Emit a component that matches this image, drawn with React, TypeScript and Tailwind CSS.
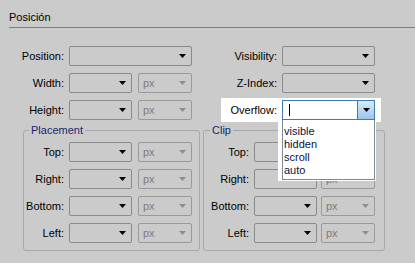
import React from 'react'

const font = { fontFamily: '"Liberation Sans", Arial, sans-serif' }

type SelProps = {
  w: string
  disabled?: boolean
  text?: string
}

const Arrow = ({ grey }: { grey?: boolean }) => (
  <svg width="7" height="4" viewBox="0 0 7 4" className="shrink-0">
    <polygon points="0,0 7,0 3.5,4" fill={grey ? '#8e8e8e' : '#000'} />
  </svg>
)

const Select = ({ w, disabled, text }: SelProps) => (
  <div
    className={`${w} h-[20px] flex items-center justify-between rounded-[2px] border pl-[4px] pr-[5px] ${
      disabled ? 'border-[#9a9a9a] text-[#7c7c7c]' : 'border-[#8a8a8a]'
    }`}
  >
    <span>{text}</span>
    <Arrow grey={disabled} />
  </div>
)

const Row = ({ label, labelW, children }: { label: string; labelW: string; children: React.ReactNode }) => (
  <div className="flex items-center h-[20px]">
    <div className={`${labelW} text-right`}>{label}</div>
    {children}
  </div>
)

const SizeRow = ({ label, labelW, gap }: { label: string; labelW: string; gap: string }) => (
  <Row label={label} labelW={labelW}>
    <div className={`flex ${gap} ml-[5px]`}>
      <Select w="w-[63px]" />
      <Select w="w-[54px]" disabled text="px" />
    </div>
  </Row>
)

export default function App() {
  return (
    <div className="w-[415px] h-[263px] bg-[#cbcbcb] text-[11px] leading-[14px] text-black overflow-hidden" style={font}>
      {/* header */}
      <div className="ml-[9px] h-[28px] pt-[10px] border-b border-[#7d7d7d]">Posición</div>

      {/* top rows */}
      <div className="flex mt-[18px]">
        <div className="flex flex-col gap-[7px] w-[221px]">
          <Row label="Position:" labelW="w-[64px]">
            <div className="ml-[5px]">
              <Select w="w-[123px]" />
            </div>
          </Row>
          <SizeRow label="Width:" labelW="w-[64px]" gap="gap-[6px]" />
          <SizeRow label="Height:" labelW="w-[64px]" gap="gap-[6px]" />
        </div>
        <div className="flex flex-col gap-[7px]">
          <Row label="Visibility:" labelW="w-[56px]">
            <div className="ml-[5px]">
              <Select w="w-[93px]" />
            </div>
          </Row>
          <Row label="Z-Index:" labelW="w-[56px]">
            <div className="ml-[5px]">
              <Select w="w-[93px]" />
            </div>
          </Row>
          <div className="-my-[2px] py-[2px] pr-[6px] bg-white">
            <Row label="Overflow:" labelW="w-[56px]">
              <div className="ml-[5px] relative">
                <div className="w-[93px] h-[20px] flex items-center border border-[#3f7cb4] bg-white">
                  <div className="ml-[6px] w-px h-[12px] bg-black" />
                  <div className="ml-auto w-[17px] h-[18px] flex items-center justify-center border-l border-[#3f7cb4] bg-gradient-to-b from-[#d8eafb] to-[#9cc4ec]">
                    <Arrow />
                  </div>
                </div>
                {/* open dropdown list */}
                <div className="absolute left-[-4px] top-[20px] w-[98px] pl-[4px] pb-[1px] bg-white z-10">
                  <div className="w-[93px] border border-t-0 border-[#7b8a99] bg-white pl-[1px] pt-[5px] pb-[2px] leading-[13px] text-[#101040]">
                    <div>visible</div>
                    <div>hidden</div>
                    <div>scroll</div>
                    <div>auto</div>
                  </div>
                </div>
              </div>
            </Row>
          </div>
        </div>
      </div>

      {/* groups */}
      <div className="flex mt-[3px]">
        <fieldset className="ml-[23px] w-[177px] border border-[#a3a9ae] rounded-[3px] pb-[7px]">
          <legend className="ml-[5px] px-[2px] text-[#1b1f6e]">Placement</legend>
          <div className="flex flex-col gap-[7px] pt-[5px]">
            <SizeRow label="Top:" labelW="w-[40px]" gap="gap-[6px]" />
            <SizeRow label="Right:" labelW="w-[40px]" gap="gap-[6px]" />
            <SizeRow label="Bottom:" labelW="w-[40px]" gap="gap-[6px]" />
            <SizeRow label="Left:" labelW="w-[40px]" gap="gap-[6px]" />
          </div>
        </fieldset>
        <fieldset className="ml-[3px] w-[182px] border border-[#a3a9ae] rounded-[3px] pb-[7px]">
          <legend className="ml-[6px] px-[2px] text-[#1b1f6e]">Clip</legend>
          <div className="flex flex-col gap-[7px] pt-[5px]">
            <SizeRow label="Top:" labelW="w-[45px]" gap="gap-[4px]" />
            <SizeRow label="Right:" labelW="w-[45px]" gap="gap-[4px]" />
            <SizeRow label="Bottom:" labelW="w-[45px]" gap="gap-[4px]" />
            <SizeRow label="Left:" labelW="w-[45px]" gap="gap-[4px]" />
          </div>
        </fieldset>
      </div>
    </div>
  )
}
